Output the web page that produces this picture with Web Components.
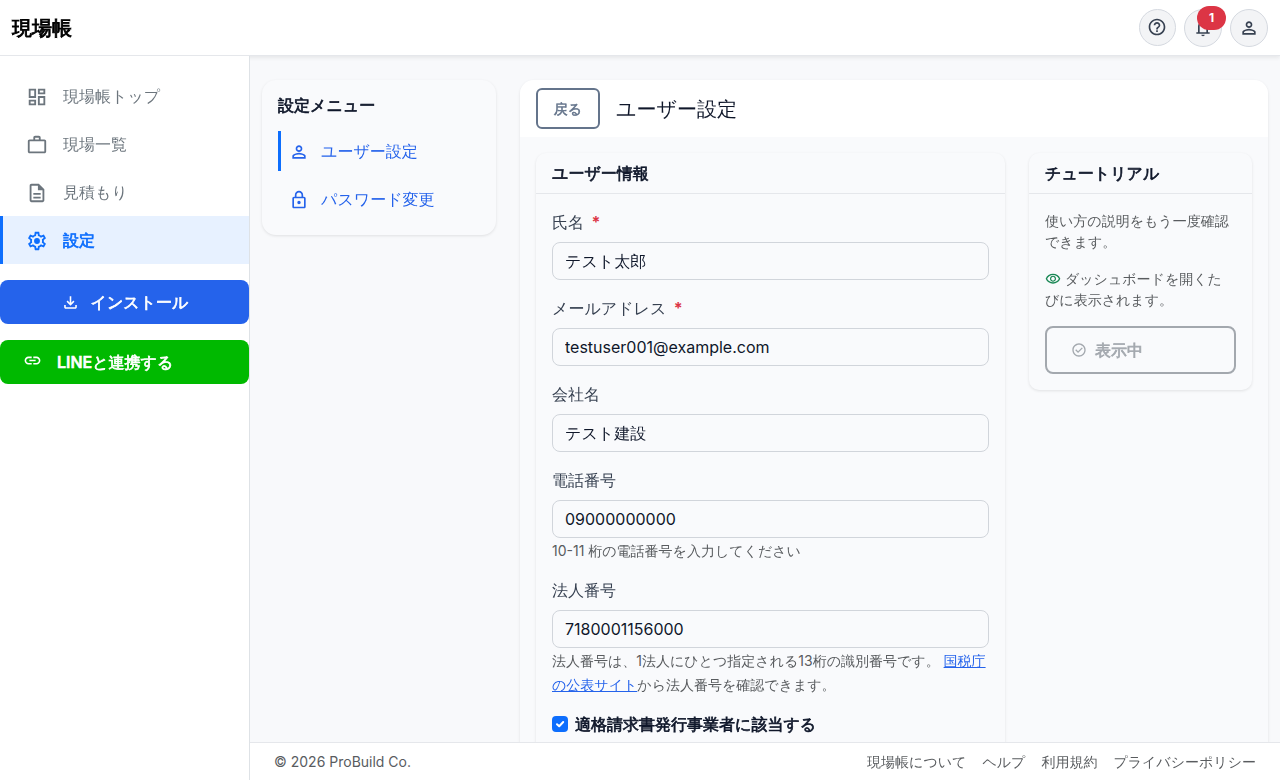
<!DOCTYPE html>
<html lang="ja">
<head>
<meta charset="utf-8">
<title>ユーザー設定 | 現場帳</title>
<style>
    body {
        margin: 0;
        height: 100vh;
        overflow: hidden;
        background: #f8f9fb;
        color: #0f172a;
        font: 16px/24px Inter, "WenQuanYi Zen Hei", "Noto Sans CJK JP", sans-serif;
        /* the kanji font has no bold face, so headings get a thin stroke */
        --bold-stroke: .7px;
    }
</style>
</head>
<body>
<app-shell>
    <app-header slot="header"></app-header>
    <side-nav slot="nav"></side-nav>
    <settings-menu slot="menu"></settings-menu>
    <settings-panel slot="panel"></settings-panel>
    <app-footer slot="footer"></app-footer>
</app-shell>

<script>
const ICONS = {
    dashboard: 'M19 5v2h-4V5h4M9 5v6H5V5h4m10 8v6h-4v-6h4M9 17v2H5v-2h4M21 3h-8v6h8V3zM11 3H3v10h8V3zm10 8h-8v10h8V11zm-10 4H3v6h8v-6z',
    work: 'M14 6V4h-4v2h4zM4 8v11h16V8H4zm16-2c1.11 0 2 .89 2 2v11c0 1.11-.89 2-2 2H4c-1.11 0-2-.89-2-2l.01-11c0-1.11.88-2 1.99-2h4V4c0-1.11.89-2 2-2h4c1.11 0 2 .89 2 2v2h4z',
    description: 'M8 16h8v2H8zm0-4h8v2H8zm6-10H6c-1.1 0-2 .9-2 2v16c0 1.1.89 2 1.99 2H18c1.1 0 2-.9 2-2V8l-6-6zm4 18H6V4h7v5h5v11z',
    settings: 'M19.43 12.98c.04-.32.07-.64.07-.98 0-.34-.03-.66-.07-.98l2.11-1.65c.19-.15.24-.42.12-.64l-2-3.46c-.09-.16-.26-.25-.44-.25-.06 0-.12.01-.17.03l-2.49 1c-.52-.4-1.08-.73-1.69-.98l-.38-2.65C14.46 2.18 14.25 2 14 2h-4c-.25 0-.46.18-.49.42l-.38 2.65c-.61.25-1.17.59-1.69.98l-2.49-1c-.06-.02-.12-.03-.18-.03-.17 0-.34.09-.43.25l-2 3.46c-.13.22-.07.49.12.64l2.11 1.65c-.04.32-.07.65-.07.98 0 .33.03.66.07.98l-2.11 1.65c-.19.15-.24.42-.12.64l2 3.46c.09.16.26.25.44.25.06 0 .12-.01.17-.03l2.49-1c.52.4 1.08.73 1.69.98l.38 2.65c.03.24.24.42.49.42h4c.25 0 .46-.18.49-.42l.38-2.65c.61-.25 1.17-.59 1.69-.98l2.49 1c.06.02.12.03.18.03.17 0 .34-.09.43-.25l2-3.46c.12-.22.07-.49-.12-.64l-2.11-1.65zm-1.98-1.71c.04.31.05.52.05.73 0 .21-.02.43-.05.73l-.14 1.13.89.7 1.08.84-.7 1.21-1.27-.51-1.04-.42-.9.68c-.43.32-.84.56-1.25.73l-1.06.43-.16 1.13-.2 1.35h-1.4l-.19-1.35-.16-1.13-1.06-.43c-.43-.18-.83-.41-1.23-.71l-.91-.7-1.06.43-1.27.51-.7-1.21 1.08-.84.89-.7-.14-1.13c-.03-.31-.05-.54-.05-.74s.02-.43.05-.73l.14-1.13-.89-.7-1.08-.84.7-1.21 1.27.51 1.04.42.9-.68c.43-.32.84-.56 1.25-.73l1.06-.43.16-1.13.2-1.35h1.39l.19 1.35.16 1.13 1.06.43c.43.18.83.41 1.23.71l.91.7 1.06-.43 1.27-.51.7 1.21-1.07.85-.89.7.14 1.13zM12 8.8a3.2 3.2 0 1 0 0 6.4a3.2 3.2 0 1 0 0-6.4z',
    download: 'M18 15v3H6v-3H4v3c0 1.1.9 2 2 2h12c1.1 0 2-.9 2-2v-3h-2zM17 11l-1.41-1.41L13 12.17V4h-2v8.17L8.41 9.59 7 11l5 5 5-5z',
    link: 'M17 7h-4v2h4c1.65 0 3 1.35 3 3s-1.35 3-3 3h-4v2h4c2.76 0 5-2.24 5-5s-2.24-5-5-5zm-6 8H7c-1.65 0-3-1.35-3-3s1.35-3 3-3h4V7H7c-2.76 0-5 2.24-5 5s2.24 5 5 5h4v-2zm-3-4h8v2H8z',
    help: 'M11 18h2v-2h-2v2zm1-16C6.48 2 2 6.48 2 12s4.48 10 10 10 10-4.48 10-10S17.52 2 12 2zm0 18c-4.41 0-8-3.59-8-8s3.59-8 8-8 8 3.59 8 8-3.59 8-8 8zm0-14c-2.21 0-4 1.79-4 4h2c0-1.1.9-2 2-2s2 .9 2 2c0 2-3 1.75-3 5h2c0-2.25 3-2.5 3-5 0-2.21-1.79-4-4-4z',
    bell: 'M4 19v-2h2v-7q0-2.075 1.25-3.687T10.5 4.2v-.7q0-.625.438-1.062T12 2t1.063.438T13.5 3.5v.7q2 .5 3.25 2.113T18 10v7h2v2zm8 3q-.825 0-1.412-.587T10 20h4q0 .825-.587 1.413T12 22m-4-5h8v-7q0-1.65-1.175-2.825T12 6T9.175 7.175T8 10z',
    person: 'M12 12q-1.65 0-2.825-1.175T8 8t1.175-2.825T12 4t2.825 1.175T16 8t-1.175 2.825T12 12m-8 8v-2.8q0-.85.438-1.562T5.6 14.55q1.55-.775 3.15-1.162T12 13t3.25.388t3.15 1.162q.725.375 1.163 1.088T20 17.2V20zm2-2h12v-.8q0-.275-.137-.5t-.363-.35q-1.35-.675-2.725-1.012T12 15t-2.775.338T6.5 16.35q-.225.125-.363.35T6 17.2zm6-8q.825 0 1.413-.587T14 8t-.587-1.412T12 6t-1.412.588T10 8t.588 1.413T12 10',
    lock: 'M12 17c1.1 0 2-.9 2-2s-.9-2-2-2-2 .9-2 2 .9 2 2 2zm6-9h-1V6c0-2.76-2.24-5-5-5S7 3.24 7 6v2H6c-1.1 0-2 .9-2 2v10c0 1.1.9 2 2 2h12c1.1 0 2-.9 2-2V10c0-1.1-.9-2-2-2zM9 6c0-1.66 1.34-3 3-3s3 1.34 3 3v2H9V6zm9 14H6V10h12v10z',
    eye: 'M12 16q1.875 0 3.188-1.312T16.5 11.5t-1.312-3.187T12 7T8.813 8.313T7.5 11.5t1.313 3.188T12 16m0-1.8q-1.125 0-1.912-.788T9.3 11.5t.788-1.912T12 8.8t1.913.788t.787 1.912t-.787 1.913T12 14.2m0 4.8q-3.65 0-6.65-2.037T1 11.5q1.35-3.425 4.35-5.462T12 4t6.65 2.038T23 11.5q-1.35 3.425-4.35 5.463T12 19m0-2q2.825 0 5.188-1.487T20.8 11.5q-1.25-2.525-3.613-4.012T12 6T6.813 7.488T3.2 11.5q1.25 2.525 3.613 4.013T12 17',
    check: 'M10.6 16.6l7.05-7.05-1.4-1.4-5.65 5.65-2.85-2.85-1.4 1.4 4.25 4.25zM12 2C6.48 2 2 6.48 2 12s4.48 10 10 10 10-4.48 10-10S17.52 2 12 2zm0 18c-4.41 0-8-3.59-8-8s3.59-8 8-8 8 3.59 8 8-3.59 8-8 8z'
};

// shared base: each component only gives its styles and markup
class BaseElement extends HTMLElement {
    constructor() {
        super();
        this.attachShadow({ mode: 'open' });
    }

    connectedCallback() {
        const template = document.createElement('template');
        template.innerHTML = `
            <style>
                *, :host { box-sizing: border-box; }
                ${this.getStyles()}
            </style>
            ${this.getTemplate()}
        `;
        this.shadowRoot.replaceChildren(template.content.cloneNode(true));
    }
}

class UiIcon extends BaseElement {
    getStyles() {
        const size = this.getAttribute('size') || 20;
        return `
            :host { display: inline-flex; flex: none; width: ${size}px; height: ${size}px; }
            svg { width: 100%; height: 100%; fill: currentColor; fill-rule: evenodd; }
        `;
    }

    getTemplate() {
        return `<svg viewBox="0 0 24 24" aria-hidden="true"><path d="${ICONS[this.getAttribute('name')]}"/></svg>`;
    }
}

class AppShell extends BaseElement {
    getStyles() {
        return `
            :host {
                display: grid;
                grid-template: 56px minmax(0, 1fr) 38px / 250px minmax(0, 1fr);
                height: 100vh;
            }
            .header { grid-column: 1 / 3; z-index: 1; }
            .nav { grid-row: 2 / 4; z-index: 2; display: grid; }
            main {
                display: grid;
                grid-template-columns: 234px minmax(0, 1fr);
                gap: 24px;
                align-items: start;
                padding: 24px 12px 0;
                overflow: hidden;
            }
        `;
    }

    getTemplate() {
        return `
            <div class="header"><slot name="header"></slot></div>
            <div class="nav"><slot name="nav"></slot></div>
            <main><slot name="menu"></slot><slot name="panel"></slot></main>
            <slot name="footer"></slot>
        `;
    }
}

class AppHeader extends BaseElement {
    getStyles() {
        return `
            :host {
                display: flex;
                align-items: center;
                justify-content: space-between;
                height: 56px;
                padding: 0 12px;
                background: #fff;
                border-bottom: 1px solid #e5e7eb;
                box-shadow: 0 2px 4px rgba(0, 0, 0, .075);
            }
            h1 {
                margin: 0;
                font-size: 20px;
                line-height: 30px;
                font-weight: 700;
                color: #000;
                -webkit-text-stroke: .9px;
            }
            nav { display: flex; align-items: center; gap: 8px; }
            .round {
                position: relative;
                display: grid;
                place-items: center;
                width: 38px;
                height: 38px;
                border: 1px solid #d5d9e0;
                border-radius: 50%;
                background: #f3f4f6;
                color: #374151;
            }
            .round.help { width: 37px; height: 37px; padding: 0 1px 1px 0; }
            .badge {
                position: absolute;
                left: 12px;
                top: -4px;
                width: 29px;
                height: 24px;
                border-radius: 12px;
                background: #dc3545;
                color: #fff;
                font-size: 12px;
                font-weight: 700;
                text-align: center;
            }
        `;
    }

    getTemplate() {
        return `
            <h1>現場帳</h1>
            <nav>
                <a class="round help"><ui-icon name="help"></ui-icon></a>
                <a class="round"><ui-icon name="bell"></ui-icon><span class="badge">1</span></a>
                <a class="round"><ui-icon name="person"></ui-icon></a>
            </nav>
        `;
    }
}

class SideNav extends BaseElement {
    getStyles() {
        return `
            :host {
                display: flex;
                flex-direction: column;
                gap: 16px;
                padding-top: 16px;
                background: #fff;
                border-right: 1px solid #dee2e6;
            }
            ul { margin: 0; padding: 0; list-style: none; }
            .item {
                display: flex;
                align-items: center;
                gap: 15px;
                height: 48px;
                padding: 2px 0 0 23px;
                border-left: 3px solid transparent;
                color: #6c757d;
            }
            .item span { margin-top: -3px; }
            .item.active { background: #e7f1ff; border-color: #0d6efd; color: #0d6efd; }
            .item.active span { -webkit-text-stroke: var(--bold-stroke); }
            .button {
                display: flex;
                align-items: center;
                height: 44px;
                border-radius: 8px;
                color: #fff;
                font-weight: 500;
            }
            .button span { -webkit-text-stroke: var(--bold-stroke); }
            .install { justify-content: center; gap: 11px; background: #2563eb; }
            .line { gap: 15px; padding-left: 23px; background: #00b900; }
            .line ui-icon { margin-bottom: 3px; }
        `;
    }

    getTemplate() {
        const items = [
            ['dashboard', '現場帳トップ'],
            ['work', '現場一覧'],
            ['description', '見積もり'],
            ['settings', '設定', 'active']
        ];
        return `
            <ul>
                ${items.map(([icon, label, state = '']) => `
                    <li class="item ${state}"><ui-icon name="${icon}" size="22"></ui-icon><span>${label}</span></li>
                `).join('')}
            </ul>
            <a class="button install"><ui-icon name="download" size="19"></ui-icon><span>インストール</span></a>
            <a class="button line"><ui-icon name="link" size="19"></ui-icon><span>LINEと連携する</span></a>
        `;
    }
}

class SettingsMenu extends BaseElement {
    getStyles() {
        return `
            :host {
                display: flex;
                flex-direction: column;
                gap: 8px;
                height: 155px;
                padding: 13px 16px;
                border-radius: 14px;
                background: #f9fafc;
                box-shadow: 0 1px 3px rgba(0, 0, 0, .1);
            }
            h2 {
                margin: 0 0 6px;
                font-size: 16px;
                line-height: 24px;
                -webkit-text-stroke: var(--bold-stroke);
            }
            a {
                display: flex;
                align-items: center;
                gap: 12px;
                height: 40px;
                padding-left: 8px;
                border-left: 3px solid transparent;
                color: #2563eb;
            }
            a.active { border-color: #0d6efd; }
            ui-icon { margin-top: 1px; }
        `;
    }

    getTemplate() {
        return `
            <h2>設定メニュー</h2>
            <a class="active"><ui-icon name="person"></ui-icon><span>ユーザー設定</span></a>
            <a><ui-icon name="lock"></ui-icon><span>パスワード変更</span></a>
        `;
    }
}

class UiCard extends BaseElement {
    getStyles() {
        return `
            :host {
                display: block;
                border-radius: 10px;
                background: #f9fafc;
                box-shadow: 0 1px 3px rgba(0, 0, 0, .1);
            }
            h3 {
                margin: 0;
                height: 41px;
                padding: 8px 16px;
                border-bottom: 1px solid #e5e7eb;
                font-size: 16px;
                line-height: 24px;
                -webkit-text-stroke: var(--bold-stroke);
            }
            .body { padding: 16px; }
        `;
    }

    getTemplate() {
        return `<h3>${this.getAttribute('heading')}</h3><div class="body"><slot></slot></div>`;
    }
}

class FormField extends BaseElement {
    getStyles() {
        return `
            :host { display: block; margin-bottom: 16px; }
            label { display: block; margin-bottom: 8px; color: #374151; }
            .required { margin-left: 3px; color: #dc3545; font-weight: 700; }
            input {
                display: block;
                width: 100%;
                height: 38px;
                padding: 6px 12px;
                border: 1px solid #d1d5db;
                border-radius: 8px;
                background: #f9fafc;
                color: #0f172a;
                font: inherit;
            }
            /* kanji sit a little higher than latin text in the same box */
            input.kanji { padding: 8px 12px 6px; }
            .hint { font-size: 14px; line-height: 24px; color: #595c5f; }
            .hint.filled { padding-top: 1px; margin-bottom: -1px; }
        `;
    }

    getTemplate() {
        const required = this.hasAttribute('required') ? ' <span class="required">*</span>' : '';
        const value = this.getAttribute('value');
        return `
            <label>${this.getAttribute('label')}${required}</label>
            <input class="${/[^\x00-\x7f]/.test(value) ? 'kanji' : ''}" value="${value}">
            <div class="hint ${this.textContent ? 'filled' : ''}"><slot></slot></div>
        `;
    }
}

class TutorialCard extends BaseElement {
    getStyles() {
        return `
            :host { display: block; }
            p { margin: 0 0 16px; font-size: 14px; line-height: 21px; color: #595c5f; }
            .state ui-icon { vertical-align: -3px; color: #198754; }
            .button {
                display: flex;
                align-items: center;
                gap: 8px;
                height: 48px;
                padding-left: 24px;
                border: 2px solid #a3a8ae;
                border-radius: 8px;
                color: #a3a8ae;
            }
            .button span { -webkit-text-stroke: var(--bold-stroke); }
        `;
    }

    getTemplate() {
        return `
            <ui-card heading="チュートリアル">
                <p>使い方の説明をもう一度確認できます。</p>
                <p class="state"><ui-icon name="eye" size="16"></ui-icon> ダッシュボードを開くたびに表示されます。</p>
                <div class="button"><ui-icon name="check" size="16"></ui-icon><span>表示中</span></div>
            </ui-card>
        `;
    }
}

class SettingsPanel extends BaseElement {
    getStyles() {
        return `
            :host {
                display: block;
                border-radius: 14px;
                background: #f9fafc;
                box-shadow: 0 1px 3px rgba(0, 0, 0, .1);
            }
            header {
                display: flex;
                align-items: center;
                gap: 16px;
                height: 57px;
                padding: 8px 16px;
                border-radius: 14px 14px 0 0;
                background: #fff;
            }
            .back {
                width: 64px;
                height: 41px;
                border: 2px solid #64748b;
                border-radius: 6px;
                color: #64748b;
                font-size: 14px;
                line-height: 38px;
                text-align: center;
                -webkit-text-stroke: .5px;
            }
            h2 { margin: 0; font-size: 20px; line-height: 24px; font-weight: 400; }
            .columns {
                display: grid;
                grid-template-columns: 469px 223px;
                gap: 24px;
                align-items: start;
                padding: 16px;
            }
            a { color: #2563eb; text-decoration: underline; }
            .check { display: flex; align-items: center; gap: 7px; -webkit-text-stroke: var(--bold-stroke); }
            .box { width: 16px; height: 16px; border-radius: 4px; background: #0d6efd; }
            .box svg { display: block; fill: none; stroke: #fff; stroke-width: 2; stroke-linecap: round; stroke-linejoin: round; }
        `;
    }

    getTemplate() {
        return `
            <header><div class="back">戻る</div><h2>ユーザー設定</h2></header>
            <div class="columns">
                <ui-card heading="ユーザー情報">
                    <form-field label="氏名" value="テスト太郎" required></form-field>
                    <form-field label="メールアドレス" value="testuser001@example.com" required></form-field>
                    <form-field label="会社名" value="テスト建設"></form-field>
                    <form-field label="電話番号" value="09000000000">10-11 桁の電話番号を入力してください</form-field>
                    <form-field label="法人番号" value="7180001156000">法人番号は、1法人にひとつ指定される13桁の識別番号です。 <a>国税庁の公表サイト</a>から法人番号を確認できます。</form-field>
                    <div class="check">
                        <span class="box"><svg viewBox="0 0 16 16"><path d="M5 8.2l2.2 2.1L11.2 6"/></svg></span>
                        <span>適格請求書発行事業者に該当する</span>
                    </div>
                </ui-card>
                <tutorial-card></tutorial-card>
            </div>
        `;
    }
}

class AppFooter extends BaseElement {
    getStyles() {
        return `
            :host {
                display: flex;
                align-items: center;
                justify-content: space-between;
                padding: 0 24px;
                background: #fff;
                border-top: 1px solid #e5e7eb;
                color: #595c5f;
                font-size: 14px;
                z-index: 1;
            }
            nav { display: flex; gap: 16px; }
        `;
    }

    getTemplate() {
        return `
            <span>© 2026 ProBuild Co.</span>
            <nav><a>現場帳について</a><a>ヘルプ</a><a>利用規約</a><a>プライバシーポリシー</a></nav>
        `;
    }
}

customElements.define('ui-icon', UiIcon);
customElements.define('ui-card', UiCard);
customElements.define('form-field', FormField);
customElements.define('app-shell', AppShell);
customElements.define('app-header', AppHeader);
customElements.define('side-nav', SideNav);
customElements.define('settings-menu', SettingsMenu);
customElements.define('tutorial-card', TutorialCard);
customElements.define('settings-panel', SettingsPanel);
customElements.define('app-footer', AppFooter);
</script>
</body>
</html>
